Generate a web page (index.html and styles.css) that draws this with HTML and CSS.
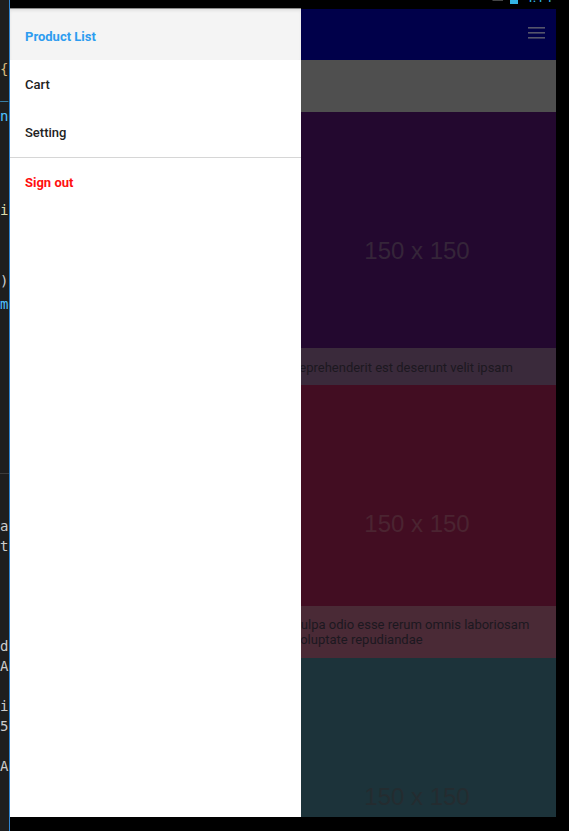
FILE: index.html
```html
<!DOCTYPE html>
<html lang="en">
<head>
<meta charset="utf-8">
<title>Product List</title>
<link rel="stylesheet" href="styles.css">
</head>
<body>
<div class="desk">
  <aside class="editor">
    <pre class="code code-top"><span class="y">{</span>
<span class="b">_</span>
<span class="b">ng</span>



<span class="f">i;</span>


<span class="w">);</span>
<span class="b">me</span></pre>
    <pre class="code code-bottom"><span class="w">a,</span>
<span class="w">tr</span>




<span class="w">d.</span>
<span class="w">A(</span>

<span class="w">i:</span>
<span class="w">5;</span>

<span class="w">A(</span></pre>
  </aside>
  <div class="device">
    <div class="statusbar">
      <div class="status-row">
        <svg class="st-wifi" width="10" height="16" viewBox="0 0 10 16"><path d="M0 5 L10 5 L5 11 Z" fill="#8a8a8a"/></svg>
        <svg class="st-signal" width="12" height="16" viewBox="0 0 12 16"><path d="M11 0 L11 11 L0.5 11 Z" fill="none" stroke="#8a8a8a" stroke-width="1"/></svg>
        <span class="st-battery"></span>
        <span class="st-time">4:14</span>
      </div>
    </div>
    <div class="app">
      <nav class="drawer">
        <div class="drawer-head">Product List</div>
        <div class="drawer-item">Cart</div>
        <div class="drawer-item">Setting</div>
        <div class="drawer-divider"></div>
        <div class="drawer-item signout">Sign out</div>
      </nav>
      <main class="content">
        <header class="toolbar">
          <svg class="menu-icon" width="17" height="12" viewBox="0 0 17 12"><rect x="0" y="0" width="17" height="1.6" fill="#55556b"/><rect x="0" y="5" width="17" height="1.6" fill="#55556b"/><rect x="0" y="10" width="17" height="1.6" fill="#55556b"/></svg>
        </header>
        <div class="subbar"></div>
        <div class="card-img c1"><span class="ph">150 x 150</span></div>
        <p class="caption cap1">reprehenderit est deserunt velit ipsam</p>
        <div class="card-img c2"><span class="ph">150 x 150</span></div>
        <p class="caption cap2">culpa odio esse rerum omnis laboriosam<br>voluptate repudiandae</p>
        <div class="card-img c3"><span class="ph">150 x 150</span></div>
      </main>
    </div>
  </div>
</div>
</body>
</html>
```
FILE: styles.css
```css
html, body {
  margin: 0;
  padding: 0;
  background: #000;
}

.desk {
  display: flex;
  width: 569px;
  height: 831px;
  background: #000;
  overflow: hidden;
}

/* code editor strip on the left */
.editor {
  width: 9px;
  flex: none;
  border-right: 1px solid #2f86d3;
  background: #1e1e1e;
  display: flex;
  flex-direction: column;
  overflow: hidden;
}

.code {
  margin: 0;
  font-family: "DejaVu Sans Mono", "Liberation Mono", monospace;
  font-size: 14px;
  white-space: pre;
  box-sizing: border-box;
}

.code-top {
  height: 474px;
  flex: none;
  line-height: 23.5px;
  padding-top: 58px;
  border-bottom: 1px solid #3c3c3c;
}

.code-bottom {
  flex: 1;
  line-height: 20px;
  padding-top: 42px;
}

.code .y { color: #d7ba7d; }
.code .b { color: #4fc1ff; }
.code .f { color: #dcdcaa; }
.code .w { color: #cccccc; }

/* emulator screen */
.device {
  width: 546px;
  flex: none;
  display: flex;
  flex-direction: column;
}

.statusbar {
  height: 8px;
  flex: none;
  overflow: hidden;
}

.status-row {
  height: 16px;
  margin-top: -11px;
  display: flex;
  justify-content: flex-end;
  align-items: flex-end;
  padding-right: 4px;
}

.st-signal { margin-right: 6px; }

.st-battery {
  width: 8px;
  height: 14px;
  background: #33b5e5;
  margin-right: 7px;
  margin-bottom: 1px;
}

.st-time {
  font-family: Roboto, "Noto Sans", sans-serif;
  font-size: 14px;
  line-height: 16px;
  color: #33b5e5;
}

.app {
  height: 809px;
  flex: none;
  display: flex;
}

/* side menu */
.drawer {
  width: 291px;
  flex: none;
  background: #fff;
  border-top: 1px solid #8c8c8c;
  font-family: Roboto, "Noto Sans", sans-serif;
  font-size: 13px;
}

.drawer-head {
  height: 51px;
  box-sizing: border-box;
  display: flex;
  align-items: center;
  padding-left: 15px;
  padding-top: 3px;
  background: #f4f4f4;
  box-shadow: inset 0 2px 3px rgba(0, 0, 0, 0.07);
  color: #2d9cf0;
  font-weight: 700;
}

.drawer-item {
  height: 48px;
  display: flex;
  align-items: center;
  padding-left: 15px;
  color: #222;
  font-weight: 500;
}

.drawer-divider {
  height: 1px;
  margin-top: 1px;
  background: #d6d6d6;
}

.drawer-item.signout {
  color: #ff1010;
  font-weight: 700;
}

/* dimmed page content */
.content {
  width: 255px;
  flex: none;
  overflow: hidden;
  display: flex;
  flex-direction: column;
  padding-top: 1px;
  background: #000;
  font-family: Roboto, "Noto Sans", sans-serif;
}

.toolbar {
  height: 51px;
  flex: none;
  background: #00004a;
  display: flex;
  justify-content: flex-end;
  align-items: center;
  padding-right: 11px;
  padding-bottom: 4px;
  box-sizing: border-box;
}

.subbar {
  height: 52px;
  flex: none;
  background: #4f4f4f;
}

.card-img {
  flex: none;
  box-sizing: border-box;
  display: flex;
  justify-content: center;
  align-items: flex-start;
  padding-right: 23px;
  padding-top: 125px;
}

.ph {
  font-family: "Liberation Sans", Arial, sans-serif;
  font-size: 24px;
  line-height: 28px;
}

.c1 { height: 236px; background: #23082f; }
.c1 .ph { color: #352539; }

.c2 { height: 221px; background: #420d22; }
.c2 .ph { color: #4b2431; }

.c3 { height: 159px; background: #1c333a; }
.c3 .ph { color: #242c30; }

.caption {
  margin: 0 0 0 -6px;
  flex: none;
  box-sizing: border-box;
  font-size: 13px;
  line-height: 15px;
  color: #1c1820;
  white-space: nowrap;
}

.cap1 {
  height: 37px;
  background: #3a2a3b;
  padding-top: 12px;
}

.cap2 {
  height: 52px;
  background: #4a2a36;
  padding-top: 11px;
  margin-left: -7px;
}
```
